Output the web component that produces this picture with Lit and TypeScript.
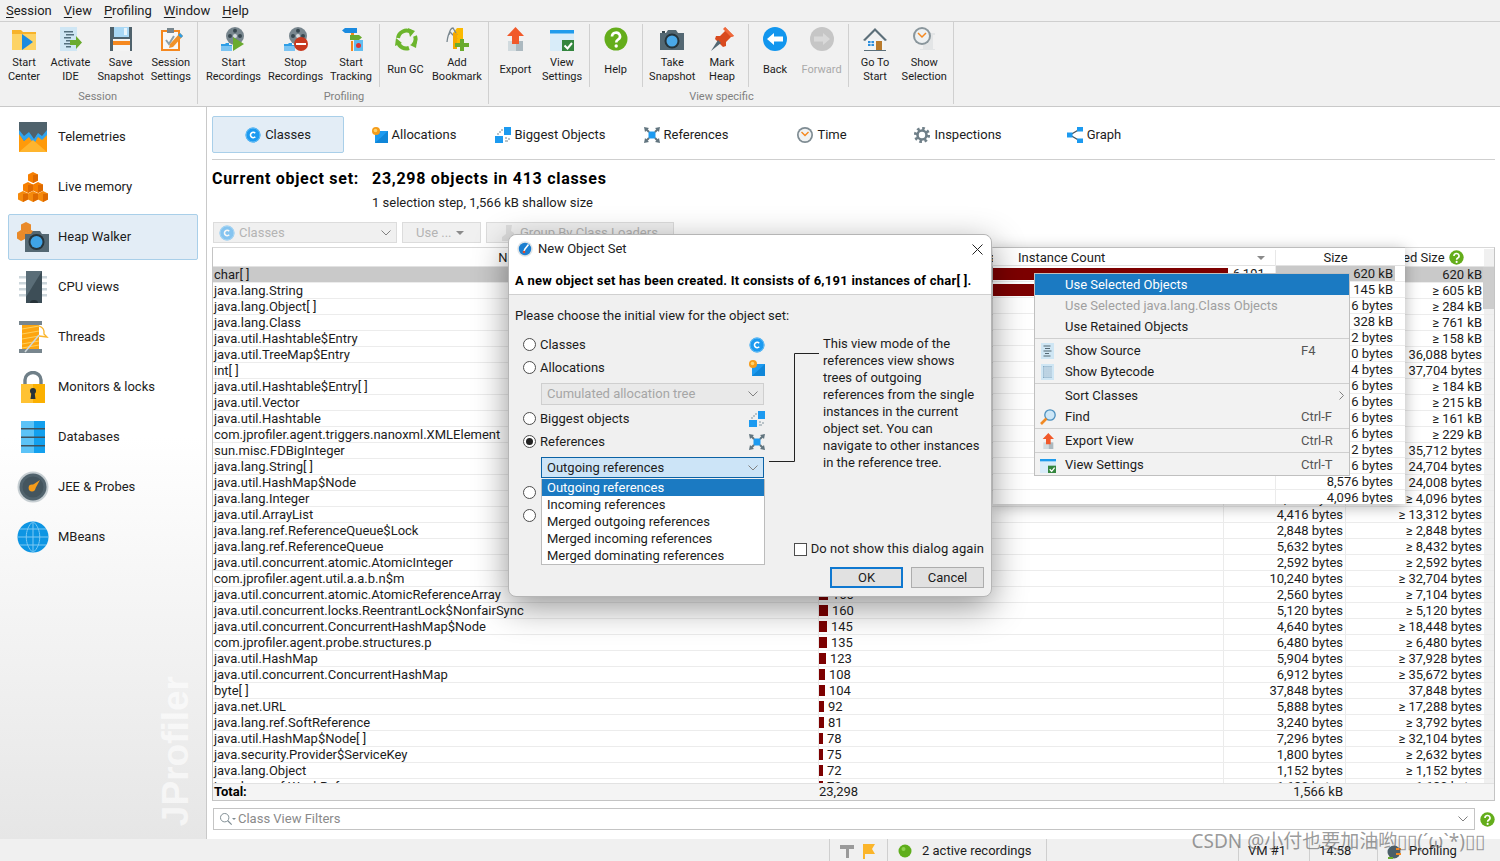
import { LitElement, html, css, svg, nothing } from 'lit';
import { customElement } from 'lit/decorators.js';

// --- icons, drawn on a 24 grid unless the name says otherwise ---
const reel = svg`
  <circle cx="14" cy="9" r="9" fill="#78868e"/>
  <circle cx="14" cy="9" r="2" fill="#d5dbde"/>
  <circle cx="14" cy="3.8" r="2" fill="#37474f"/><circle cx="14" cy="14.2" r="2" fill="#37474f"/>
  <circle cx="9" cy="9" r="2" fill="#37474f"/><circle cx="19" cy="9" r="2" fill="#37474f"/>
  <path d="M0 17h4l1-1h3v2h3v6H0z" fill="#2f9ee6"/>
  <path d="M0 19h11v5H0z" fill="#7cc4f2"/>`;

const ICONS: Record<string, unknown> = {
  startCenter: svg`
    <path d="M0 3h9l2 2h13v18H0z" fill="#f7b32b"/>
    <path d="M0 7h24v16H0z" fill="#fdd365"/>
    <path d="M10 7l11 8-11 8z" fill="#1b8be0"/>`,
  activateIde: svg`
    <path d="M2 0h17v24H2z" fill="#cfe6f4"/>
    <path d="M6 4h9v1.500H6zM8 7h8v1.500H8zM6 10h7v1.500H6zM8 13h5v1.500H8zM6 16h6v1.500H6zM8 19h5v1.500H8z" fill="#54707f"/>
    <path d="M12 13h6v-4l6 6.500-6 6.500v-4h-6z" fill="#6aab2e"/>`,
  saveSnapshot: svg`
    <path d="M1 0h22v24H1z" fill="#4f626c"/>
    <path d="M5 0h15v10H5z" fill="#a9d8f5"/><path d="M15 1h3v7h-3z" fill="#e8f4fb"/>
    <path d="M4 12h17v12H4z" fill="#f4f4f4"/><path d="M4 14h17v4H4z" fill="#f5881f"/>`,
  sessionSettings: svg`
    <path d="M2 3h19v21H2z" fill="#f5881f"/><path d="M4 5h15v17H4z" fill="#f8f8f8"/>
    <path d="M8 1h7v5H8z" fill="#78868e"/>
    <path d="M7 13l3 4 5-8" fill="none" stroke="#8aa0ac" stroke-width="2"/>
    <path d="M21 6l3 3-10 11-4 1 1-4z" fill="#f0922b"/><path d="M21 6l3 3-2 2-3-3z" fill="#2f9ee6"/>`,
  startRecordings: svg`${reel}<path d="M12 10l11 7-11 7z" fill="#6aab2e"/>`,
  stopRecordings: svg`${reel}<circle cx="17" cy="17" r="7" fill="#c8391f"/><path d="M12 16h10v2H12z" fill="#fff"/>`,
  startTracking: svg`
    <path d="M12 6h3v5h-3zM12 14h2v10h-2z" fill="#f5881f"/>
    <path d="M15 13h9v11h-9z" fill="#61bdf0"/><circle cx="19.500" cy="18.500" r="2.500" fill="#d33"/>
    <path d="M3 3.500L6 1h12v5H6z" fill="#1b8be0"/>
    <path d="M11 8h9l3 2.500-3 2.500h-9z" fill="#6aab2e"/>`,
  runGC: svg`
    <g fill="none" stroke="#6cb52d" stroke-width="4">
      <path d="M4 11a8.500 8.500 0 0 1 13-6"/><path d="M21 9a8.500 8.500 0 0 1-2 9"/><path d="M15 21a8.500 8.500 0 0 1-11-6"/>
    </g>
    <path d="M14 1l7 3-5 6zM23 14l-1 7-6-3zM1 19l1-8 6 5z" fill="#6cb52d"/>`,
  addBookmark: svg`
    <path d="M8 6l4-5h6v15H8z" fill="#fbb900"/>
    <path d="M12 12L5 5q-2 2-3 10M12 8L8 1Q5 1 4 8" fill="none" stroke="#78868e" stroke-width="1.300"/>
    <path d="M8 6h4v16H8z" fill="#f5a800"/>
    <path d="M15 12h4v4h5v4h-5v4h-4v-4h-5v-4h5z" fill="#6aab2e"/>`,
  export: svg`
    <path d="M5 14h8v10H5z" fill="#d1dade"/><path d="M13 14h7v10h-7z" fill="#acb9c0"/>
    <path d="M12.500 0L21 9h-5v8H9V9H4z" fill="#f1592a"/>`,
  viewSettings: svg`
    <path d="M0 3h24v21H0z" fill="#d8ecf9"/><path d="M0 3h24v3.500H0z" fill="#1f9bec"/>
    <path d="M12 13h12v11H12z" fill="#34863e"/>
    <path d="M14.500 18.500l3 3 4.500-5.500" fill="none" stroke="#fff" stroke-width="2"/>`,
  help: svg`
    <circle cx="12" cy="12" r="11.500" fill="#64ad1b"/>
    <path d="M8 9.500a4 3.800 0 1 1 6 3.200q-1.800 1-1.800 2.800" fill="none" stroke="#fff" stroke-width="2.600"/>
    <circle cx="12.200" cy="19" r="1.700" fill="#fff"/>`,
  takeSnapshot: svg`
    <path d="M0 6h6l2-3h8l2 3h6v17H0z" fill="#546873"/>
    <circle cx="12" cy="14" r="7.500" fill="#26343b"/><circle cx="12" cy="14" r="5.500" fill="#4aa8e8"/>
    <path d="M2 4h3v2H2z" fill="#37474f"/>`,
  markHeap: svg`
    <path d="M15 0l9 9-3 1-5 5 0 4-3 1-8-8 1-3 4 0 5-5z" fill="#d94a1e"/>
    <path d="M15 0l9 9-3 1-8-8z" fill="#f0683a"/>
    <path d="M8 13l3 3-10 8z" fill="#546873"/>`,
  back: svg`
    <circle cx="12" cy="12" r="12" fill="#1296ee"/>
    <path d="M4 12l7-6v3.500h9v5h-9V18z" fill="#fff"/>`,
  forward: svg`
    <circle cx="12" cy="12" r="12" fill="#c6c6c6"/>
    <path d="M20 12l-7-6v3.500H4v5h9V18z" fill="#d9d9d9"/>`,
  goToStart: svg`
    <path d="M3 12h18v11H3z" fill="#f2f4f5"/>
    <path d="M12 1L0 13l2 1L12 4l10 10 2-1z" fill="#5c6f79"/>
    <path d="M13 14h6v9h-6z" fill="#b97a2b"/><path d="M5 14h6v5H5z" fill="#2e8fdd"/>
    <path d="M7.600 14h.8v5h-.8zM5 16.200h6v.8H5z" fill="#fff"/>
    <path d="M1 23h22v1H1z" fill="#5c6f79"/>`,
  showSelection: svg`
    <path d="M11 6h12v2h-2v14h2v1H8v-1h3z" fill="#e3e5e6"/>
    <circle cx="10" cy="9" r="9" fill="#8a969c"/><circle cx="10" cy="9" r="7" fill="#eef1f2"/>
    <path d="M6 6l4 4 4-4" fill="none" stroke="#f5881f" stroke-width="1.500"/>`,

  // 16 grid, tabs and dialog
  classC: svg`
    <circle cx="8" cy="8" r="7.500" fill="#1c9af0"/><circle cx="8" cy="8" r="7" fill="none" stroke="#6cc0f5"/>
    <path d="M10.200 6.200a2.700 2.700 0 1 0 0 3.600" fill="none" stroke="#fff" stroke-width="1.600"/>`,
  allocations: svg`
    <path d="M3 4h13v12H3z" fill="#1c9af0"/><path d="M16 4v12H3z" fill="#0f86d8"/>
    <circle cx="4" cy="4" r="4" fill="#f59c1a"/><circle cx="3.500" cy="3.500" r="1.800" fill="#ffd36a"/>`,
  biggest: svg`
    <path d="M9 0h7v8H9z" fill="#1c9af0"/><path d="M0 9h8v7H0z" fill="#1c9af0"/>
    <path d="M4 4h2v2H4zM6 2h2v2H6zM2 6h2v2H2zM10 10h2v2h-2zM13 11h2v2h-2zM10 13h3v2h-3z" fill="#b9c3c8"/>`,
  references: svg`
    <path d="M4.500 4.500h7v7h-7z" fill="#1c9af0"/>
    <path d="M0 0l5 1-4 4zM16 0l-1 5-4-4zM0 16l1-5 4 4zM16 16l-5-1 4-4z" fill="#62757f"/>
    <path d="M2 2l3 3M14 2l-3 3M2 14l3-3M14 14l-3-3" stroke="#62757f" stroke-width="2"/>`,
  time: svg`
    <circle cx="8" cy="8" r="8" fill="#7e8b92"/><circle cx="8" cy="8" r="6.300" fill="#f0f2f3"/>
    <path d="M4.500 5L8 8.500 11.500 5" fill="none" stroke="#f5881f" stroke-width="1.400"/>`,
  inspections: svg`
    <circle cx="8" cy="8" r="6.600" fill="none" stroke="#6f7f88" stroke-width="3" stroke-dasharray="2.600 2.580"/>
    <circle cx="8" cy="8" r="4.500" fill="none" stroke="#6f7f88" stroke-width="2.600"/>`,
  graph: svg`
    <path d="M3 8L13 2M3 8l10 6" stroke="#40525c" stroke-width="1.300"/>
    <path d="M0 5.500h5.500v5H0z" fill="#1c9af0"/><path d="M10 0h6v4.500h-6zM10 11.500h6V16h-6z" fill="#1c9af0"/>`,
  search: svg`
    <circle cx="6.500" cy="6.500" r="4.800" fill="none" stroke="#7e8b92" stroke-width="1.100"/>
    <path d="M10 10l4.500 4.500" stroke="#7e8b92" stroke-width="1.300"/>`,
  loader: svg`<path d="M6 0h6l-1 6 3 2v8H2v-4l4-3z" fill="#c9c9c9"/>`,
  sourceDoc: svg`
    <path d="M1 0h13v16H1z" fill="#cfe6f4"/>
    <path d="M3.500 2.500h7v1h-7zM5 5h5v1H5zM3.500 7.500h8v1h-8zM5 10h4v1H5zM3.500 12.500h7v1h-7z" fill="#546873"/>`,
  bytecodeDoc: svg`
    <path d="M1 0h13v16H1z" fill="#cfe6f4"/>
    <path d="M3 2h9v12H3z" fill="#6f9ab8" opacity=".8"/>
    <path d="M5 2v12M7 2v12M9 2v12M11 2v12M3 4h9M3 6h9M3 8h9M3 10h9M3 12h9" stroke="#e6f2fa" stroke-width=".7"/>`,
  find: svg`
    <circle cx="10" cy="6" r="5.200" fill="#cde7f7" stroke="#4b8fbe" stroke-width="1.300"/>
    <path d="M6.500 9.500L1 15" stroke="#f08a24" stroke-width="2.600"/>`,
  badge: svg`
    <circle cx="8" cy="8" r="7.800" fill="#dfe4e7"/><circle cx="8" cy="8" r="6.200" fill="#1c7fd0"/>
    <path d="M11.500 3.500L8 8l-1.600 3.500" fill="none" stroke="#fff" stroke-width="1.500"/>
    <circle cx="7" cy="11" r="1.300" fill="#e04b2a"/>`,
  pin: svg`<path d="M1 2h14v4h-5v9H7V6H1z" fill="#9a9a9a"/>`,
  flag: svg`<path d="M2 1h12l-3 5 3 5H4v5H2z" fill="#fbb52a"/>`,
  dot: svg`<circle cx="8" cy="8" r="6.500" fill="#5fae1c"/><circle cx="6.500" cy="6" r="2" fill="#8ed24e"/>`,
  plug: svg`
    <circle cx="7" cy="9" r="6.500" fill="#4c5f69"/>
    <path d="M9 5h5v2H9zM9 10h5v2H9z" fill="#f5881f"/><path d="M1 14h5v2H1z" fill="#6aab2e"/>`,

  // 32 grid, left navigation
  telemetries: svg`
    <path d="M2 1h28v30H2z" fill="#ff9a0a"/>
    <path d="M2 1h28v12l-5 5-5-4-4 7-4-6-5 5-5-8z" fill="#4f626c"/>
    <path d="M2 9l5 6 5-4 5 7 4-6 4 3 5-6v5l-5 5-4-3-4 7-5-7-5 4-5-7z" fill="#2fa4ee"/>
    <path d="M2 31l14-12L30 31z" fill="#ffb52e"/>`,
  liveMemory: svg`
    <path d="M16 1l5 2.500v6L16 12l-5-2.500v-6z" fill="#f77f00"/>
    <path d="M11 11l5 2.500v6L11 22l-5-2.500v-6zM21 11l5 2.500v6L21 22l-5-2.500v-6z" fill="#f77f00"/>
    <path d="M6 20l5 2.500v6L6 31l-5-2.500v-6zM16 20l5 2.500v6L16 31l-5-2.500v-6zM26 20l5 2.500v6L26 31l-5-2.500v-6z" fill="#f58a0c"/>
    <path d="M16 4v8l5-2.500v-6zM11 14v8l5-2.500v-6zM21 14v8l5-2.500v-6zM6 23v8l5-2.500v-6zM16 23v8l5-2.500v-6zM26 23v8l5-2.500v-6z" fill="#de6a00"/>`,
  heapWalker: svg`
    <path d="M9 1l5 2.500v6L9 12 4 9.500v-6z" fill="#e98a2a"/>
    <path d="M4 9l5 2.500v6L4 20l-4-2.500v-6zM14 9l5 2.500v6L14 20l-5-2.500v-6z" fill="#e98a2a"/>
    <path d="M8 13h6l2-3h7l2 3h7v18H8z" fill="#546873"/>
    <circle cx="19.500" cy="21" r="8" fill="#26343b"/><circle cx="19.500" cy="21" r="6" fill="#3fa3e6"/>`,
  cpu: svg`
    <path d="M2 5h28v2.500H2zM2 11h28v2.500H2zM2 17h28v2.500H2zM2 23h28v2.500H2z" fill="#ccd6db"/>
    <path d="M9 0h16v32H9z" fill="#3d4e57"/>
    <path d="M9 0h16L9 26z" fill="#5a6d77"/>
    <path d="M13 32a4 3 0 0 1 8 0z" fill="#263238"/>`,
  threads: svg`
    <path d="M2 0h23v4H2zM2 28h23v4H2z" fill="#78868e"/>
    <path d="M5 4h17v24H5z" fill="#fda50f"/>
    <path d="M5 8l17-3M5 13l17-3M5 18l17-3M5 23l17-3M5 27l17-3" stroke="#ffd05c" stroke-width="1.200"/>
    <path d="M22 14L8 31" stroke="#cfd7db" stroke-width="1.500"/>
    <path d="M22 5q6 2 5 8l3 3-8-1" fill="none" stroke="#fbb52a" stroke-width="1.300"/>`,
  monitors: svg`
    <path d="M8 14V9a8 7.500 0 0 1 16 0v5" fill="none" stroke="#6f7f88" stroke-width="3.400"/>
    <path d="M4 13h24v19H4z" fill="#ffc233"/><path d="M16 13h12v19H16z" fill="#fbb000"/>
    <circle cx="16" cy="20" r="3" fill="#263238"/><path d="M14.500 21h3l1 7h-5z" fill="#263238"/>`,
  databases: svg`
    <path d="M4 0h24v32H4z" fill="#13a0ee"/><path d="M4 0h13v32H4z" fill="#5cc3f7"/>
    <path d="M4 7h24v1.500H4zM4 15.500h24V17H4zM4 24h24v1.500H4z" fill="#40525c"/>`,
  jee: svg`
    <circle cx="16" cy="16" r="15.500" fill="#c6ced2"/><circle cx="16" cy="16" r="13.500" fill="#51636d"/>
    <circle cx="16" cy="16" r="10.500" fill="#44555e"/>
    <path d="M23 9l-5 9-4-3z" fill="#f59c1a"/><circle cx="15" cy="17" r="3.400" fill="#f59c1a"/>`,
  mbeans: svg`
    <circle cx="16" cy="16" r="15.500" fill="#0d95e3"/>
    <path d="M16 .5v31M.5 16h31M3 8h26M3 24h26M16 .5c-9 7-9 24 0 31M16 .5c9 7 9 24 0 31" fill="none" stroke="#7cc8f3" stroke-width="1"/>`,
};

function icon(name: string, size: number, grid = 24) {
  return html`<svg class="ico" width=${size} height=${size} viewBox="0 0 ${grid} ${grid}">${ICONS[name]}</svg>`;
}

// --- data ---
type Tool = { icon: string; lines: string[]; off?: boolean };
type Chunk = Tool[];
const GROUPS: { label: string; chunks: Chunk[] }[] = [
  {
    label: 'Session',
    chunks: [[
      { icon: 'startCenter', lines: ['Start', 'Center'] },
      { icon: 'activateIde', lines: ['Activate', 'IDE'] },
      { icon: 'saveSnapshot', lines: ['Save', 'Snapshot'] },
      { icon: 'sessionSettings', lines: ['Session', 'Settings'] },
    ]],
  },
  {
    label: 'Profiling',
    chunks: [
      [
        { icon: 'startRecordings', lines: ['Start', 'Recordings'] },
        { icon: 'stopRecordings', lines: ['Stop', 'Recordings'] },
        { icon: 'startTracking', lines: ['Start', 'Tracking'] },
      ],
      [
        { icon: 'runGC', lines: ['Run GC'] },
        { icon: 'addBookmark', lines: ['Add', 'Bookmark'] },
      ],
    ],
  },
  {
    label: 'View specific',
    chunks: [
      [
        { icon: 'export', lines: ['Export'] },
        { icon: 'viewSettings', lines: ['View', 'Settings'] },
      ],
      [{ icon: 'help', lines: ['Help'] }],
      [
        { icon: 'takeSnapshot', lines: ['Take', 'Snapshot'] },
        { icon: 'markHeap', lines: ['Mark', 'Heap'] },
      ],
      [
        { icon: 'back', lines: ['Back'] },
        { icon: 'forward', lines: ['Forward'], off: true },
      ],
      [
        { icon: 'goToStart', lines: ['Go To', 'Start'] },
        { icon: 'showSelection', lines: ['Show', 'Selection'] },
      ],
    ],
  },
];

const NAV = [
  ['telemetries', 'Telemetries'],
  ['liveMemory', 'Live memory'],
  ['heapWalker', 'Heap Walker'],
  ['cpu', 'CPU views'],
  ['threads', 'Threads'],
  ['monitors', 'Monitors & locks'],
  ['databases', 'Databases'],
  ['jee', 'JEE & Probes'],
  ['mbeans', 'MBeans'],
];

const TABS = [
  ['classC', 'Classes'],
  ['allocations', 'Allocations'],
  ['biggest', 'Biggest Objects'],
  ['references', 'References'],
  ['time', 'Time'],
  ['inspections', 'Inspections'],
  ['graph', 'Graph'],
];

// name, instance count (0 when it sits under the dialog), size, retained size
const ROWS: [string, number, string, string][] = [
  ['char[ ]', 0, '', '620 kB'],
  ['java.lang.String', 0, '', '≥ 605 kB'],
  ['java.lang.Object[ ]', 0, '', '≥ 284 kB'],
  ['java.lang.Class', 0, '', '≥ 761 kB'],
  ['java.util.Hashtable$Entry', 0, '', '≥ 158 kB'],
  ['java.util.TreeMap$Entry', 0, '', '36,088 bytes'],
  ['int[ ]', 0, '', '37,704 bytes'],
  ['java.util.Hashtable$Entry[ ]', 0, '', '≥ 184 kB'],
  ['java.util.Vector', 0, '', '≥ 215 kB'],
  ['java.util.Hashtable', 0, '', '≥ 161 kB'],
  ['com.jprofiler.agent.triggers.nanoxml.XMLElement', 0, '', '≥ 229 kB'],
  ['sun.misc.FDBigInteger', 0, '', '35,712 bytes'],
  ['java.lang.String[ ]', 0, '', '24,704 bytes'],
  ['java.util.HashMap$Node', 0, '', '24,008 bytes'],
  ['java.lang.Integer', 0, '4,096 bytes', '≥ 4,096 bytes'],
  ['java.util.ArrayList', 0, '4,416 bytes', '≥ 13,312 bytes'],
  ['java.lang.ref.ReferenceQueue$Lock', 0, '2,848 bytes', '≥ 2,848 bytes'],
  ['java.lang.ref.ReferenceQueue', 0, '5,632 bytes', '≥ 8,432 bytes'],
  ['java.util.concurrent.atomic.AtomicInteger', 0, '2,592 bytes', '≥ 2,592 bytes'],
  ['com.jprofiler.agent.util.a.a.b.n$m', 0, '10,240 bytes', '≥ 32,704 bytes'],
  ['java.util.concurrent.atomic.AtomicReferenceArray', 160, '2,560 bytes', '≥ 7,104 bytes'],
  ['java.util.concurrent.locks.ReentrantLock$NonfairSync', 160, '5,120 bytes', '≥ 5,120 bytes'],
  ['java.util.concurrent.ConcurrentHashMap$Node', 145, '4,640 bytes', '≥ 18,448 bytes'],
  ['com.jprofiler.agent.probe.structures.p', 135, '6,480 bytes', '≥ 6,480 bytes'],
  ['java.util.HashMap', 123, '5,904 bytes', '≥ 37,928 bytes'],
  ['java.util.concurrent.ConcurrentHashMap', 108, '6,912 bytes', '≥ 35,672 bytes'],
  ['byte[ ]', 104, '37,848 bytes', '37,848 bytes'],
  ['java.net.URL', 92, '5,888 bytes', '≥ 17,288 bytes'],
  ['java.lang.ref.SoftReference', 81, '3,240 bytes', '≥ 3,792 bytes'],
  ['java.util.HashMap$Node[ ]', 78, '7,296 bytes', '≥ 32,104 bytes'],
  ['java.security.Provider$ServiceKey', 75, '1,800 bytes', '≥ 2,632 bytes'],
  ['java.lang.Object', 72, '1,152 bytes', '≥ 1,152 bytes'],
  ['java.lang.ref.WeakReference', 70, '1,680 bytes', '≥ 1,680 bytes'],
];

// sizes in the window that floats over the table
const FLOAT_SIZES = [
  '620 kB', '145 kB', '6 bytes', '328 kB', '2 bytes', '0 bytes', '4 bytes', '6 bytes',
  '6 bytes', '6 bytes', '6 bytes', '2 bytes', '6 bytes', '8,576 bytes', '4,096 bytes',
];

const OPTIONS_TOP = [
  ['Classes', 'classC'],
  ['Allocations', 'allocations'],
];

const REF_CHOICES = [
  'Outgoing references',
  'Incoming references',
  'Merged outgoing references',
  'Merged incoming references',
  'Merged dominating references',
];

const DESCRIPTION = [
  'This view mode of the',
  'references view shows',
  'trees of outgoing',
  'references from the single',
  'instances in the current',
  'object set. You can',
  'navigate to other instances',
  'in the reference tree.',
];

@customElement('app-root')
export class AppRoot extends LitElement {
  static styles = css`
    :host {
      display: block;
      position: relative;
      width: 1500px;
      height: 861px;
      overflow: hidden;
      background: #fff;
      color: #1c1c1c;
      font: 13px/16px Roboto, "Liberation Sans", sans-serif;
    }
    .ico { display: block; flex: none; }
    .page { display: flex; flex-direction: column; height: 100%; }

    .menubar {
      display: flex;
      gap: 12px;
      height: 21px;
      padding: 0 6px;
      align-items: center;
      background: #f1f1f1;
      border-bottom: 1px solid #cfcfcf;
    }
    .menubar u { text-underline-offset: 2px; }

    .toolbar {
      display: flex;
      height: 85px;
      flex: none;
      box-sizing: border-box;
      background: #f1f1f1;
      border-bottom: 1px solid #c9c9c9;
      font-size: 11px;
      line-height: 14px;
    }
    .group {
      display: flex;
      flex-direction: column;
      padding: 2px 3px 0 4px;
      border-right: 1px solid #d0d0d0;
      margin-bottom: 2px;
    }
    .group:first-child { padding-left: 1px; }
    .group:last-child { padding-left: 3px; }
    .chunks { display: flex; height: 68px; }
    .chunk { display: flex; height: 63px; }
    .chunk + .chunk { border-left: 1px solid #d0d0d0; margin-left: 3px; padding-left: 3px; }
    .tool {
      display: flex;
      flex-direction: column;
      align-items: center;
      box-sizing: border-box;
      min-width: 46px;
      padding: 3px 3.500px 0;
      text-align: center;
    }
    .tool .lbl { height: 28px; display: flex; flex-direction: column; justify-content: center; margin-top: 5px; white-space: nowrap; }
    .tool.off { color: #a9a9a9; }
    .glabel { text-align: center; color: #808080; font-size: 11px; height: 14px; }

    .main { flex: 1; display: flex; min-height: 0; }
    .side {
      position: relative;
      box-sizing: border-box;
      width: 207px;
      padding: 7px 8px 0;
      border-right: 1px solid #c9c9c9;
      background: linear-gradient(#fff 45%, #e6e6e6 100%);
      overflow: hidden;
    }
    .nav {
      display: flex;
      align-items: center;
      gap: 9px;
      box-sizing: border-box;
      width: 190px;
      height: 46px;
      margin-bottom: 4px;
      padding-left: 8px;
      border: 1px solid transparent;
      border-radius: 2px;
    }
    .nav.on { background: #e3edf6; border-color: #a9cfe9; }
    .brand {
      position: absolute;
      right: 11px;
      bottom: 13px;
      writing-mode: vertical-rl;
      transform: rotate(180deg);
      font: bold 37px/38px "Liberation Sans", sans-serif;
      color: rgba(255, 255, 255, .6);
    }

    .content { flex: 1; min-width: 0; display: flex; flex-direction: column; padding: 9px 5px 9px 5px; }
    .tabs {
      display: grid;
      grid-template-columns: repeat(7, 132px);
      gap: 4px;
      padding-bottom: 6px;
      border-bottom: 1px solid #cfcfcf;
    }
    .tab {
      display: flex;
      align-items: center;
      justify-content: center;
      gap: 4px;
      height: 37px;
      box-sizing: border-box;
      border: 1px solid transparent;
    }
    .tab.on { background: #e3edf6; border-color: #a9cfe9; border-radius: 2px; }
    .heading {
      display: flex;
      margin-top: 9px;
      font-weight: bold;
      font-size: 16px;
      letter-spacing: .72px;
      line-height: 20px;
      color: #000;
      white-space: nowrap;
    }
    .heading span:first-child { width: 160px; }
    .sub { margin: 6px 0 0 160px; }
    .controls { display: flex; gap: 5px; margin: 11px 0 0 1px; height: 21px; flex: none; color: #b4b4b4; }
    .ctl {
      display: flex;
      align-items: center;
      gap: 4px;
      box-sizing: border-box;
      padding: 0 5px;
      border: 1px solid #dcdcdc;
      background: #f0f0f0;
    }
    .ctl .chev { margin-left: auto; }
    .ctl .ico { opacity: .5; }
    .ctl-class { width: 184px; }
    .ctl-use { width: 79px; padding-left: 13px; }
    .ctl-group { width: 188px; padding-left: 13px; }
    .tri { width: 0; height: 0; border: 4.500px solid transparent; border-top-color: #8a8a8a; border-bottom: 0; }

    .table {
      flex: 1;
      min-height: 0;
      margin-top: 4px;
      display: flex;
      flex-direction: column;
      border: 1px solid #c4c4c4;
      border-top-color: #d8d8d8;
    }
    .cols { display: grid; grid-template-columns: 605px 405px 122px 139px 1fr; }
    .thead { height: 19px; flex: none; border-bottom: 1px solid #e2e2e2; box-sizing: border-box; padding-top: 1px; }
    .thead > div { display: flex; align-items: center; justify-content: center; gap: 4px; border-left: 1px solid #e8e8e8; }
    .thead > div:first-child { border-left: 0; }
    .tbody { flex: 1; min-height: 0; overflow: hidden; position: relative; }
    .row { height: 16px; box-sizing: border-box; border-bottom: 1px solid #ececec; white-space: nowrap; line-height: 15px; }
    .row > div { padding: 0 2px 0 1px; overflow: hidden; border-left: 1px solid #ebebeb; }
    .row > div:first-child { border-left: 0; }
    .row .num { text-align: right; }
    .row.sel > div:not(.track) { background: #c9c9c9; border-left-color: #c9c9c9; }
    .count { display: flex; align-items: center; gap: 4px; margin-left: -1px; }
    .bar { height: 11px; background: #7d0000; flex: none; }
    .track { background: #f0f0f0; border-left-color: #f0f0f0 !important; padding: 0 !important; }
    .thumb { position: absolute; right: 0; top: 0; width: 11px; height: 42px; background: #cdcdcd; }
    .total { height: 17px; flex: none; background: #f4f4f4; border-top: 1px solid #e2e2e2; line-height: 16px; box-sizing: border-box; }
    .total > div { padding: 0 2px 0 1px; }
    .total .num { text-align: right; }
    .total b { color: #000; }

    .filter {
      display: flex;
      align-items: center;
      gap: 5px;
      margin-top: 7px;
    }
    .field {
      flex: 1;
      display: flex;
      align-items: center;
      gap: 2px;
      height: 22px;
      box-sizing: border-box;
      margin-left: 1px;
      padding: 0 6px 0 5px;
      border: 1px solid #c4c4c4;
      color: #8a8a8a;
    }
    .field .chev { margin-left: auto; }
    .drop { width: 0; height: 0; border: 2px solid transparent; border-top-color: #7e8b92; border-bottom: 0; margin-left: -3px; }
    .chev { width: 10px; height: 6px; flex: none; stroke: #808080; fill: none; }

    .status { display: flex; height: 22px; flex: none; background: #f0f0f0; }
    .st { display: flex; align-items: center; box-sizing: border-box; border-left: 1px solid #cfcfcf; gap: 6px; padding: 1px 0 0 9px; }
    .st-start { width: 829px; border-left: 0; }
    .st-fill { flex: 1; }
    .st-tools { width: 58px; }
    .st-rec { width: 159px; gap: 9px; }
    .st-vm { width: 71px; }
    .st-time { width: 68px; }
    .st-run { width: 123px; }

    .mark {
      position: absolute;
      right: 15px;
      bottom: 8px;
      font: 19px/24px "Noto Sans", "Noto Sans CJK SC", sans-serif;
      color: rgba(90, 90, 90, .62);
      white-space: nowrap;
    }

    /* window that floats behind the menu */
    .floater {
      position: absolute;
      left: 993px;
      top: 247px;
      width: 412px;
      height: 256px;
      overflow: hidden;
      background: #fff;
      border-top: 1px solid #bdbdbd;
      box-shadow: 0 3px 14px rgba(0, 0, 0, .3);
    }
    .fhead, .frow { display: grid; grid-template-columns: 282px 120px; }
    .fhead { height: 18px; box-sizing: border-box; border-bottom: 1px solid #e2e2e2; padding-top: 2px; }
    .fhead .ic { padding-left: 25px; display: flex; align-items: center; justify-content: space-between; padding-right: 10px; }
    .fhead .sz { display: flex; align-items: center; justify-content: center; border-left: 1px solid #e8e8e8; }
    .frow { height: 16px; box-sizing: border-box; border-bottom: 1px solid #ececec; line-height: 15px; }
    .frow .sz { text-align: right; padding-right: 2px; border-left: 1px solid #ebebeb; white-space: nowrap; }
    .frow.sel .sz { background: #c9c9c9; }
    .frow .ic { display: flex; align-items: center; gap: 5px; }
    .frow .bar { width: 235px; height: 12px; }

    .menu {
      position: absolute;
      left: 1034px;
      top: 273px;
      width: 316px;
      box-sizing: border-box;
      background: #f2f2f2;
      border: 1px solid #c0c0c0;
    }
    .mi { display: grid; grid-template-columns: 30px 236px 1fr; align-items: center; height: 21px; }
    .mi .ico { margin-left: 5px; }
    .mi.hot { background: #1b7ac2; color: #fff; }
    .mi.off { color: #a0a0a0; }
    .mi .key { color: #555; }
    .mi .go { justify-self: end; margin-right: 5px; width: 5px; height: 9px; stroke: #808080; fill: none; }
    .msep { height: 1px; margin: 1px 0; background: #cfcfcf; }

    .dialog {
      position: absolute;
      left: 508px;
      top: 234px;
      width: 484px;
      height: 363px;
      box-sizing: border-box;
      display: flex;
      flex-direction: column;
      background: #f0f0f0;
      border: 1px solid #b5b5b5;
      border-radius: 8px;
      box-shadow: 0 10px 34px rgba(0, 0, 0, .42);
    }
    .dtop { background: #fff; border-radius: 8px 8px 0 0; border-bottom: 1px solid #d0d0d0; padding: 0 6px; }
    .dtitle { display: flex; align-items: center; gap: 5px; height: 28px; padding-left: 1px; color: #222; margin: 0 0 0 1px; }
    .close { margin-left: auto; margin-right: 2px; stroke: #222; fill: none; }
    .dmsg { font-weight: bold; color: #000; height: 31px; line-height: 36px; white-space: nowrap; letter-spacing: .25px; }
    .dbody { flex: 1; display: flex; flex-direction: column; padding: 12px 7px 8px 6px; min-height: 0; }
    .prompt { line-height: 18px; }
    .dgrid { display: flex; margin-top: 8px; }
    .dleft { width: 250px; position: relative; }
    .opt { display: flex; align-items: center; height: 23px; padding-left: 8px; gap: 4px; }
    .opt .ico:last-child { margin-left: auto; }
    .radio {
      width: 13px;
      height: 13px;
      box-sizing: border-box;
      flex: none;
      border: 1px solid #4d4d4d;
      border-radius: 50%;
      background: #fff;
      display: flex;
      align-items: center;
      justify-content: center;
    }
    .radio.on::after { content: ""; width: 7px; height: 7px; border-radius: 50%; background: #222; }
    .combo {
      display: flex;
      align-items: center;
      justify-content: space-between;
      box-sizing: border-box;
      width: 223px;
      height: 22px;
      margin-left: 26px;
      padding: 0 5px;
      border: 1px solid #cfcfcf;
      background: #e9e9e9;
      color: #a6a6a6;
    }
    .combo.first { margin-top: 4px; margin-bottom: 2px; }
    .combo.open {
      margin-top: 4px;
      margin-bottom: 3px;
      height: 21px;
      background: #cce4f7;
      border-color: #0b62a5;
      color: #1c1c1c;
    }
    .pop {
      position: absolute;
      left: 26px;
      top: 146px;
      width: 224px;
      box-sizing: border-box;
      background: #fff;
      border: 1px solid #bcbcbc;
      border-top: 0;
      z-index: 1;
    }
    .pop div { height: 17px; line-height: 17px; padding-left: 5px; white-space: nowrap; }
    .pop div.hot { background: #1b7ac2; color: #fff; }
    .bracket { display: block; flex: none; }
    .desc { margin-top: 2px; line-height: 17px; white-space: nowrap; }
    .dfoot { margin-top: auto; display: flex; flex-direction: column; align-items: flex-end; }
    .check { display: flex; align-items: center; gap: 4px; margin-bottom: 10px; letter-spacing: .1px; }
    .box { width: 13px; height: 13px; box-sizing: border-box; border: 1px solid #4d4d4d; background: #fff; }
    .btns { display: flex; gap: 8px; }
    .btn {
      display: flex;
      align-items: center;
      justify-content: center;
      width: 73px;
      height: 21px;
      box-sizing: border-box;
      background: #e1e1e1;
      border: 1px solid #adadad;
    }
    .btn.def { border: 2px solid #0f78d0; }
  `;

  private chev() {
    return html`<svg class="chev" viewBox="0 0 10 6"><path d="M.5.5L5 5 9.500.5"/></svg>`;
  }

  private renderToolbar() {
    return html`
      <div class="toolbar">
        ${GROUPS.map(g => html`
          <div class="group">
            <div class="chunks">
              ${g.chunks.map(c => html`
                <div class="chunk">
                  ${c.map(t => html`
                    <div class="tool ${t.off ? 'off' : ''}">
                      ${icon(t.icon, 24)}
                      <div class="lbl">${t.lines.map(l => html`<div>${l}</div>`)}</div>
                    </div>
                  `)}
                </div>
              `)}
            </div>
            <div class="glabel">${g.label}</div>
          </div>
        `)}
      </div>
    `;
  }

  private renderTable() {
    return html`
      <div class="table">
        <div class="cols thead">
          <div>Name</div>
          <div>Instance Count</div>
          <div>Size</div>
          <div>Retained Size ${icon('help', 15)}</div>
          <div class="track"></div>
        </div>
        <div class="tbody">
          ${ROWS.map((r, i) => html`
            <div class="cols row ${i === 0 ? 'sel' : ''}">
              <div>${r[0]}</div>
              <div>
                ${r[1] ? html`<div class="count"><span class="bar" style="width:${Math.round(r[1] / 18)}px"></span>${r[1]}</div>` : nothing}
              </div>
              <div class="num">${r[2]}</div>
              <div class="num">${r[3]}</div>
              <div class="track"></div>
            </div>
          `)}
          <div class="thumb"></div>
        </div>
        <div class="cols total">
          <div><b>Total:</b></div>
          <div>23,298</div>
          <div class="num">1,566 kB</div>
          <div></div>
          <div></div>
        </div>
      </div>
    `;
  }

  private renderFloater() {
    return html`
      <div class="floater">
        <div class="fhead">
          <div class="ic">Instance Count <span class="tri"></span></div>
          <div class="sz">Size</div>
        </div>
        ${FLOAT_SIZES.map((s, i) => html`
          <div class="frow ${i === 0 ? 'sel' : ''}">
            <div class="ic">
              ${i < 2 ? html`<span class="bar"></span>${i === 0 ? '6,191' : ''}` : nothing}
            </div>
            <div class="sz">${s}</div>
          </div>
        `)}
      </div>
    `;
  }

  private renderMenu() {
    const mi = (label: string, ic = '', key = '', cls = '') => html`
      <div class="mi ${cls}">
        <span>${ic ? icon(ic, 16, ic === 'export' || ic === 'viewSettings' ? 24 : 16) : nothing}</span>
        <span>${label}</span>
        <span class="key">${key}</span>
      </div>
    `;
    return html`
      <div class="menu">
        ${mi('Use Selected Objects', '', '', 'hot')}
        ${mi('Use Selected java.lang.Class Objects', '', '', 'off')}
        ${mi('Use Retained Objects')}
        <div class="msep"></div>
        ${mi('Show Source', 'sourceDoc', 'F4')}
        ${mi('Show Bytecode', 'bytecodeDoc')}
        <div class="msep"></div>
        <div class="mi">
          <span></span><span>Sort Classes</span>
          <svg class="go" viewBox="0 0 5 9"><path d="M.5.5l4 4-4 4"/></svg>
        </div>
        ${mi('Find', 'find', 'Ctrl-F')}
        <div class="msep"></div>
        ${mi('Export View', 'export', 'Ctrl-R')}
        <div class="msep"></div>
        ${mi('View Settings', 'viewSettings', 'Ctrl-T')}
      </div>
    `;
  }

  private renderDialog() {
    const opt = (label: string, ic: string, on = false) => html`
      <div class="opt">
        <span class="radio ${on ? 'on' : ''}"></span>
        <span>${label}</span>
        ${icon(ic, 16, 16)}
      </div>
    `;
    return html`
      <div class="dialog">
        <div class="dtop">
          <div class="dtitle">
            ${icon('badge', 16, 16)}
            <span>New Object Set</span>
            <svg class="close" width="11" height="11" viewBox="0 0 11 11"><path d="M.5.5l10 10M10.500.5l-10 10"/></svg>
          </div>
          <div class="dmsg">A new object set has been created. It consists of 6,191 instances of char[ ].</div>
        </div>
        <div class="dbody">
          <div class="prompt">Please choose the initial view for the object set:</div>
          <div class="dgrid">
            <div class="dleft">
              ${OPTIONS_TOP.map(o => opt(o[0], o[1]))}
              <div class="combo first"><span>Cumulated allocation tree</span>${this.chev()}</div>
              ${opt('Biggest objects', 'biggest')}
              ${opt('References', 'references', true)}
              <div class="combo open"><span>Outgoing references</span>${this.chev()}</div>
              <div class="opt"><span class="radio"></span></div>
              <div class="opt"><span class="radio"></span></div>
              <div class="pop">
                ${REF_CHOICES.map((c, i) => html`<div class=${i === 0 ? 'hot' : ''}>${c}</div>`)}
              </div>
            </div>
            <svg class="bracket" width="58" height="134" viewBox="0 0 58 134">
              <path d="M54 20.500H29.500v108H4" fill="none" stroke="#222"/>
            </svg>
            <div class="desc">${DESCRIPTION.map(l => html`<div>${l}</div>`)}</div>
          </div>
          <div class="dfoot">
            <div class="check"><span class="box"></span><span>Do not show this dialog again</span></div>
            <div class="btns">
              <div class="btn def">OK</div>
              <div class="btn">Cancel</div>
            </div>
          </div>
        </div>
      </div>
    `;
  }

  render() {
    return html`
      <div class="page">
        <div class="menubar">
          <span><u>S</u>ession</span>
          <span><u>V</u>iew</span>
          <span><u>P</u>rofiling</span>
          <span><u>W</u>indow</span>
          <span><u>H</u>elp</span>
        </div>
        ${this.renderToolbar()}
        <div class="main">
          <div class="side">
            ${NAV.map((n, i) => html`
              <div class="nav ${i === 2 ? 'on' : ''}">
                ${icon(n[0], 32, 32)}
                <span>${n[1]}</span>
              </div>
            `)}
            <div class="brand">JProfiler</div>
          </div>
          <div class="content">
            <div class="tabs">
              ${TABS.map((t, i) => html`
                <div class="tab ${i === 0 ? 'on' : ''}">${icon(t[0], 16, 16)}<span>${t[1]}</span></div>
              `)}
            </div>
            <div class="heading"><span>Current object set:</span><span>23,298 objects in 413 classes</span></div>
            <div class="sub">1 selection step, 1,566 kB shallow size</div>
            <div class="controls">
              <div class="ctl ctl-class">${icon('classC', 16, 16)}<span>Classes</span>${this.chev()}</div>
              <div class="ctl ctl-use"><span>Use ...</span><span class="tri"></span></div>
              <div class="ctl ctl-group">${icon('loader', 16, 16)}<span>Group By Class Loaders</span></div>
            </div>
            ${this.renderTable()}
            <div class="filter">
              <div class="field">
                ${icon('search', 14, 16)}<span class="drop"></span>
                <span>Class View Filters</span>
                ${this.chev()}
              </div>
              ${icon('help', 15)}
            </div>
          </div>
        </div>
        <div class="status">
          <div class="st st-start"></div>
          <div class="st st-tools">${icon('pin', 16, 16)}${icon('flag', 16, 16)}</div>
          <div class="st st-rec">${icon('dot', 16, 16)}<span>2 active recordings</span></div>
          <div class="st st-fill"></div>
          <div class="st st-vm">VM #1</div>
          <div class="st st-time">14:58</div>
          <div class="st st-run">${icon('plug', 16, 16)}<span>Profiling</span></div>
        </div>
      </div>
      ${this.renderFloater()}
      ${this.renderMenu()}
      ${this.renderDialog()}
      <div class="mark">CSDN @小付也要加油哟▯▯(´ω\`*)▯▯</div>
    `;
  }
}
